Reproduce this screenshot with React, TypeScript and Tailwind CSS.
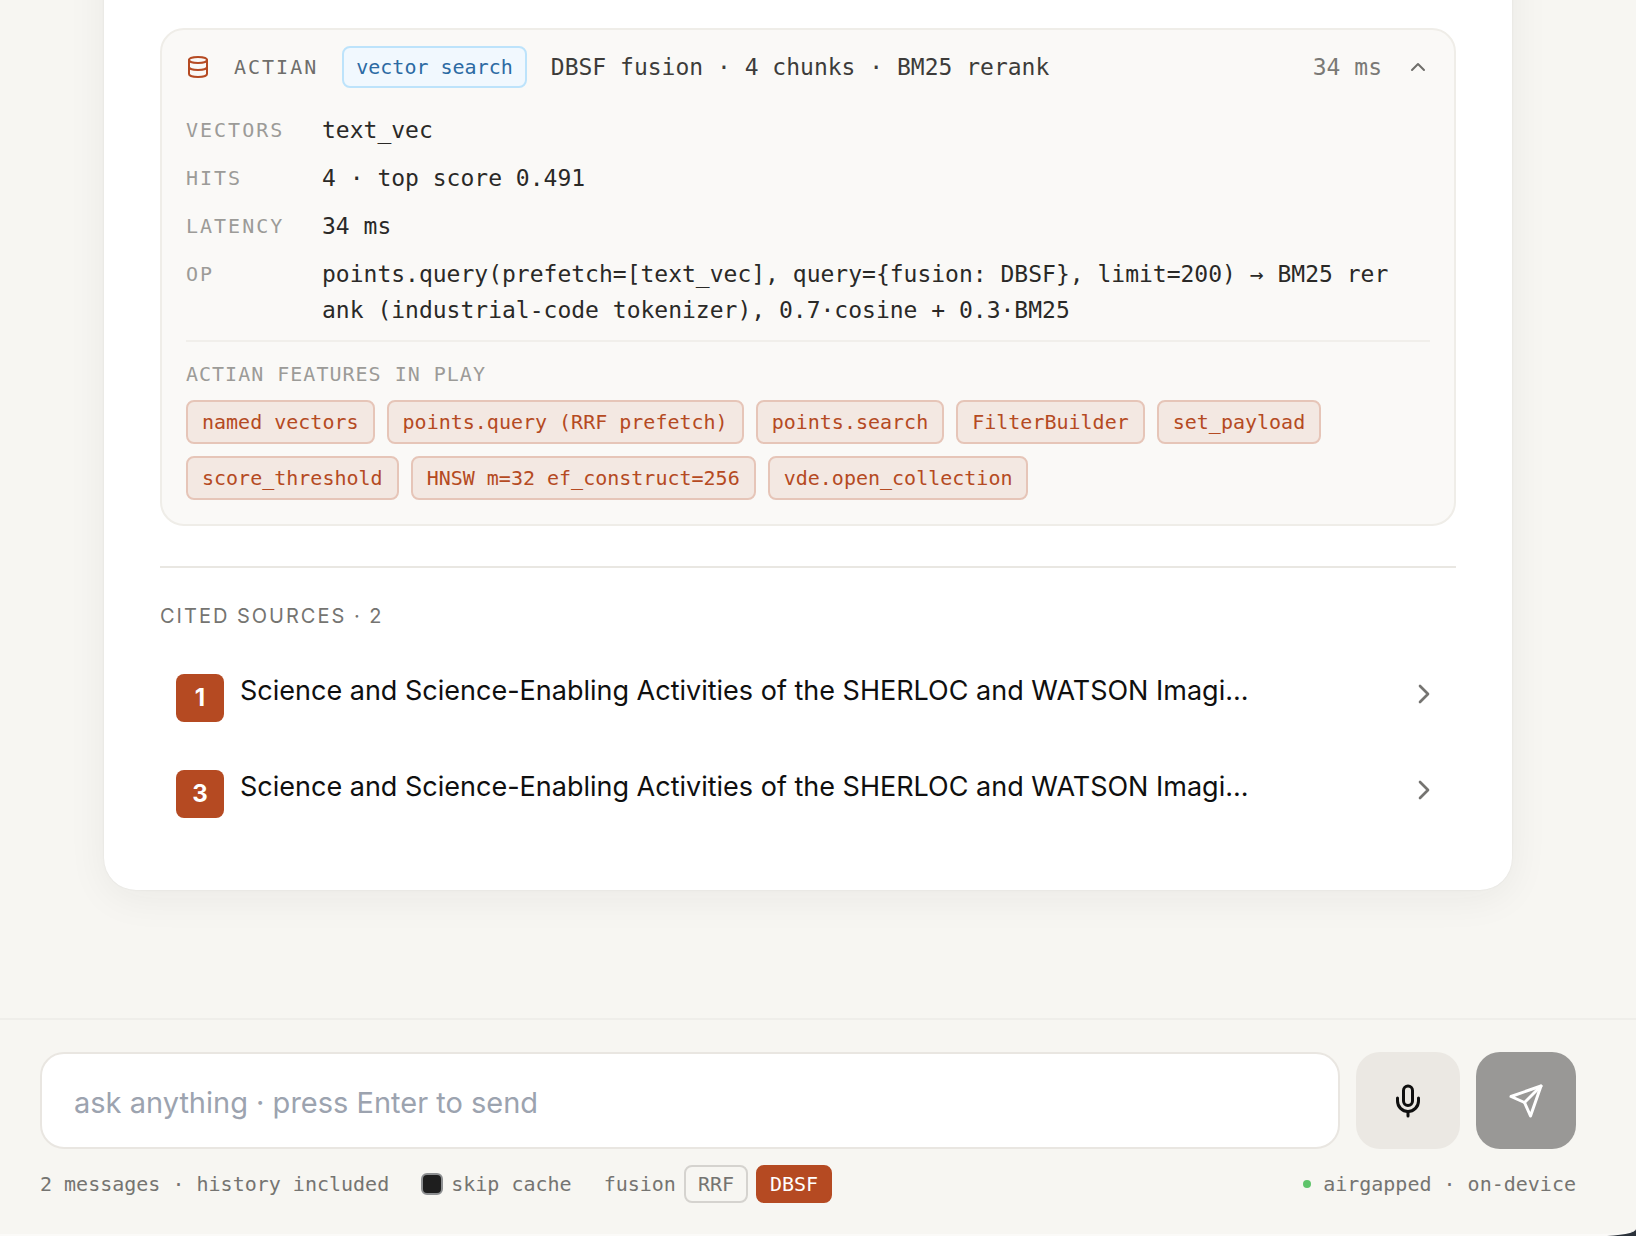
import { ChevronRight, ChevronUp, Database, Mic } from "lucide-react";
import { useState } from "react";

const traceRows = [
  { label: "vectors", value: "text_vec" },
  { label: "hits", value: "4 · top score 0.491" },
  { label: "latency", value: "34 ms" },
  {
    label: "op",
    value:
      "points.query(prefetch=[text_vec], query={fusion: DBSF}, limit=200) → BM25 rerank (industrial-code tokenizer), 0.7·cosine + 0.3·BM25",
  },
];

const features = [
  "named vectors",
  "points.query (RRF prefetch)",
  "points.search",
  "FilterBuilder",
  "set_payload",
  "score_threshold",
  "HNSW m=32 ef_construct=256",
  "vde.open_collection",
];

const sources = [
  {
    id: 1,
    title:
      "Science and Science-Enabling Activities of the SHERLOC and WATSON Imagi...",
  },
  {
    id: 3,
    title:
      "Science and Science-Enabling Activities of the SHERLOC and WATSON Imagi...",
  },
];

function SendIcon() {
  return (
    <svg
      viewBox="0 0 24 24"
      className="size-9"
      fill="none"
      stroke="currentColor"
      strokeWidth="2"
      strokeLinecap="round"
      strokeLinejoin="round"
      aria-hidden="true"
    >
      <path d="M22 2 11 13" />
      <path d="m22 2-7 20-4-9-9-4Z" />
    </svg>
  );
}

function TracePanel() {
  const [open, setOpen] = useState(true);

  return (
    <section className="rounded-3xl border-2 border-[#efede8] bg-[#faf9f7] font-['DejaVu_Sans_Mono',monospace]">
      <button
        type="button"
        onClick={() => setOpen(!open)}
        aria-expanded={open}
        className="flex w-full items-center gap-6 px-6 py-4 text-left"
      >
        <Database size={24} className="shrink-0 text-[#b54a22]" aria-hidden="true" />
        <span className="text-xl tracking-[2px] text-[#6f6e6b] uppercase">
          Actian
        </span>
        <span className="rounded-lg border-2 border-[#bde3fb] bg-[#f1f8fe] px-3 text-xl leading-[38px] text-[#2c6aa3]">
          vector search
        </span>
        <span className="min-w-0 flex-1 truncate text-[23px] text-[#3d3c3a]">
          DBSF fusion · 4 chunks · BM25 rerank
        </span>
        <span className="text-[23px] text-[#7a7976]">34 ms</span>
        <ChevronUp size={24} className="shrink-0 text-[#6f6e6b]" aria-hidden="true" />
      </button>

      {open ? (
        <div className="px-6 pt-2 pb-6">
          <dl className="flex flex-col gap-3">
            {traceRows.map((row) => (
              <div key={row.label} className="flex pr-8 leading-9">
                <dt className="w-34 shrink-0 text-xl leading-9 tracking-[2px] text-[#9c9b98] uppercase">
                  {row.label}
                </dt>
                <dd className="min-w-0 flex-1 text-[23px] leading-9 break-all text-[#2a2927]">
                  {row.value}
                </dd>
              </div>
            ))}
          </dl>
          <div className="mt-3 border-t-2 border-[#f1efeb] pt-4">
            <h3 className="text-xl leading-8 tracking-[1px] text-[#9c9b98] uppercase">
              Actian features in play
            </h3>
            <ul className="mt-2.5 flex flex-wrap gap-3">
              {features.map((feature) => (
                <li
                  key={feature}
                  className="rounded-lg border-2 border-[#e6c5b8] bg-[#f3e8e2] px-3.5 text-xl leading-10 text-[#b54a22]"
                >
                  {feature}
                </li>
              ))}
            </ul>
          </div>
        </div>
      ) : null}
    </section>
  );
}

function CitedSources() {
  return (
    <section className="mt-10 border-t-2 border-[#e9e7e2] pt-8">
      <h2 className="text-xl leading-8 tracking-[2px] text-[#757471] uppercase">
        Cited sources · 2
      </h2>
      <ul className="mt-[18px]">
        {sources.map((source) => (
          <li key={source.id}>
            <a href={`#source-${source.id}`} className="flex gap-4 px-4 py-6">
              <span className="flex size-12 shrink-0 items-center justify-center rounded-lg bg-[#b54a22] text-2xl font-bold text-white">
                {source.id}
              </span>
              <span className="min-w-0 flex-1 truncate text-[27px] leading-[34px] text-[#0f0f0f]">
                {source.title}
              </span>
              <ChevronRight
                size={32}
                className="mt-1 shrink-0 text-[#757471]"
                aria-hidden="true"
              />
            </a>
          </li>
        ))}
      </ul>
    </section>
  );
}

function Composer() {
  const [message, setMessage] = useState("");
  const [fusion, setFusion] = useState("DBSF");

  return (
    <footer className="border-t-2 border-[#efeeea] pt-8 pr-[60px] pb-[31px] pl-10">
      <form
        className="flex h-[97px] gap-4"
        onSubmit={(e) => {
          e.preventDefault();
          setMessage("");
        }}
      >
        <input
          type="text"
          aria-label="Message"
          value={message}
          onChange={(e) => setMessage(e.target.value)}
          placeholder="ask anything · press Enter to send"
          className="min-w-0 flex-1 rounded-3xl border-2 border-[#e9e6e1] bg-white px-8 pt-1 text-[29px] text-[#0f0f0f] outline-none placeholder:text-[#9ca3af]"
        />
        <button
          type="button"
          aria-label="Record"
          className="flex w-[104px] items-center justify-center rounded-3xl bg-[#ebe8e3] text-[#0f0f0f]"
        >
          <Mic size={36} aria-hidden="true" />
        </button>
        <button
          type="submit"
          aria-label="Send"
          className="flex w-[100px] items-center justify-center rounded-3xl bg-[#999896] text-white"
        >
          <SendIcon />
        </button>
      </form>

      <div className="mt-4 flex items-center font-['DejaVu_Sans_Mono',monospace] text-xl leading-[34px] text-[#757471]">
        <span>2 messages · history included</span>
        <label className="ml-8 flex items-center gap-2">
          <input
            type="checkbox"
            className="size-[22px] appearance-none rounded-md border-2 border-[#8d8f91] bg-[#1e1e1e] checked:bg-[#b54a22]"
          />
          skip cache
        </label>
        <div className="ml-8 flex items-center gap-2" role="group" aria-label="fusion">
          <span>fusion</span>
          {["RRF", "DBSF"].map((mode) => (
            <button
              key={mode}
              type="button"
              aria-pressed={fusion === mode}
              onClick={() => setFusion(mode)}
              className={`rounded-lg border-2 px-3 ${
                fusion === mode
                  ? "border-[#b54a22] bg-[#b54a22] text-white"
                  : "border-[#d5d3cf]"
              }`}
            >
              {mode}
            </button>
          ))}
        </div>
        <span className="ml-auto flex items-center gap-3">
          <span className="size-2 rounded-full bg-[#5fc46b]" />
          airgapped · on-device
        </span>
      </div>
    </footer>
  );
}

export default function App() {
  return (
    <div className="min-h-screen bg-[#2b323a]">
      <div className="flex min-h-screen flex-col overflow-hidden rounded-br-[36px_7px] border-b-2 border-[#fbfaf8] bg-[#f7f6f2] font-['Inter',sans-serif]">
        <main className="flex-1 pr-[124px] pb-16 pl-[104px]">
          {/* the answer card runs on above the visible part of the thread */}
          <article className="-mt-16 rounded-b-[32px] bg-white px-14 pt-[92px] pb-12 shadow-[0_0_2px_rgba(0,0,0,0.08),0_8px_40px_rgba(40,40,30,0.06)]">
            <TracePanel />
            <CitedSources />
          </article>
        </main>
        <Composer />
      </div>
    </div>
  );
}
